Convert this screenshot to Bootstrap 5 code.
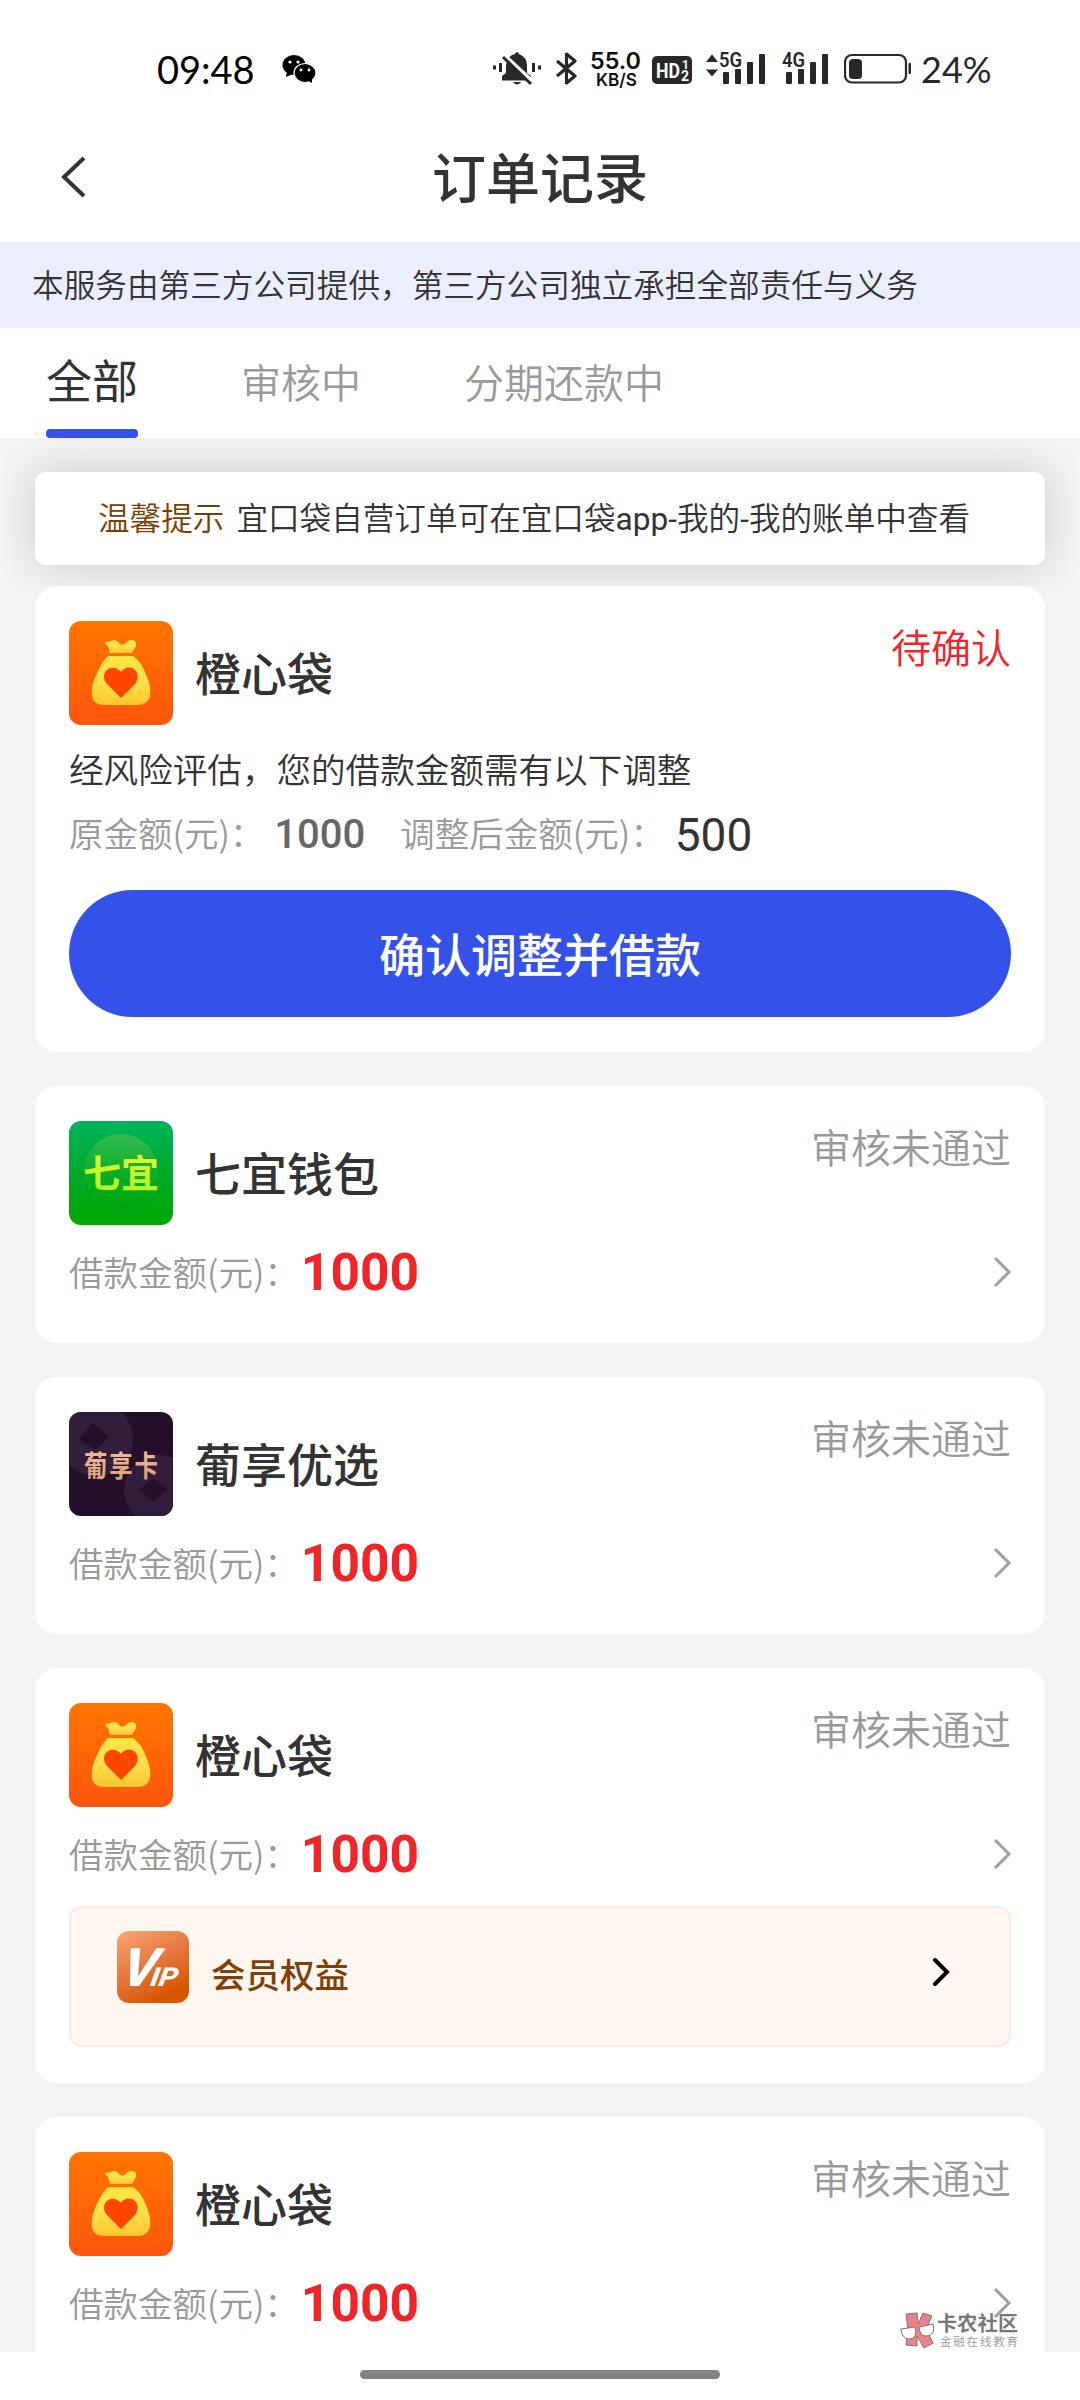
<!DOCTYPE html>
<html lang="zh-CN">
<head>
<meta charset="utf-8">
<meta name="viewport" content="width=device-width, initial-scale=1">
<title>订单记录</title>
<link href="https://cdn.jsdelivr.net/npm/bootstrap@5.3.0/dist/css/bootstrap.min.css" rel="stylesheet">
<style>
:root{--ink:#333;--muted:#999;--brand:#3452e9;--alert:#f22427}
body{width:1080px;height:2400px;overflow:hidden;background:#fff;color:var(--ink);font-family:"Noto Sans CJK SC",sans-serif;font-weight:350}
svg{display:block;flex:none}
.screen{height:2400px}
.status-bar{height:130px;padding:40px 87px 0 157px}
.clock{font:400 38px/50px Lato,sans-serif;color:#000;width:125px;padding-top:4px}
.status-icons svg{fill:#282828}
.pct{font:400 36px/50px Lato,sans-serif;color:#282828;padding-top:4px;width:72px}
.title-bar{height:112px;padding:0 60px}
.back{padding-top:23px}
.page-title{font-size:54px;line-height:64px;font-weight:500;margin-top:14px}
.notice{height:86px;background:#ebeefc;font-size:31.65px;line-height:83px;padding-left:32px}
.tabs{height:110px;padding-left:46px}
.tabs .nav-link{padding:0;color:var(--muted);font-size:40px;line-height:106px;height:110px;margin-right:103px}
.tabs .nav-link.active{color:var(--ink);font-size:46px;font-weight:400;line-height:100px;border-bottom:9px solid transparent;position:relative}
.tabs .nav-link.active::after{content:"";position:absolute;left:0;right:0;bottom:-9px;height:9px;border-radius:4px;background:var(--brand)}
.feed{height:1914px;background:#f3f3f3;padding:34px 35px 0;overflow:hidden}
.tip{flex:none;height:93px;border-radius:10px;background:#fff;box-shadow:0 0 44px rgba(0,0,0,.16);font-size:31.6px;line-height:88px;margin-bottom:21px;padding-left:63px;white-space:nowrap}
.tip-label{color:#7a3e00;margin-right:12px}
.latin{font-family:Roboto,sans-serif;font-weight:400}
.order{position:relative;border:0;border-radius:22px;background:#fff;padding:35px 34px 0;margin-bottom:34px;flex:none}
.order-confirm{height:466px}
.order-plain{height:257px}
.order-vip{height:415px}
.app-name{font-size:46px;line-height:60px;font-weight:500;margin:20px 0 0 22px}
.state{font-size:40px;line-height:56px;color:var(--muted);margin-left:auto;margin-top:-3px}
.state-alert{color:var(--alert)}
.field{font-size:34.5px;line-height:50px;color:var(--muted);white-space:nowrap;margin-top:-3px}
.amount-row{height:70px;margin-top:12px}
.amount{font:700 51.5px/60px Roboto,sans-serif;color:var(--alert);margin:1px 0 0 2px}
.amount-row svg{margin-right:-2px}
.remark{font-size:34.6px;line-height:50px;margin-top:18px}
.compare{height:64px;margin-top:8px}
.old-sum{font:500 40px/50px Roboto,sans-serif;color:#666;margin:3px 0 0 10px;width:126px}
.new-sum{font:400 46px/50px Roboto,sans-serif;margin:3px 0 0 10px}
.btn-confirm{height:127px;border-radius:64px;background:var(--brand);color:#fff;font-size:46px;font-weight:500;line-height:116px;padding:0 0 3px;border:0;margin-top:25px}
.vip{height:141px;margin-top:17px;border:2px solid #fcebdf;border-radius:12px;background:#fff7f0;padding:23px 57px 0 46px}
.vip-text{font-size:34.5px;line-height:50px;font-weight:500;color:#7f4109;margin:17px 0 0 22px}
.home-zone{height:48px;padding-top:18px}
.home-pill{width:360px;height:9px;border-radius:5px;background:#808080}
.stamp{position:absolute;left:900px;top:2301px;width:122px;height:60px}
</style>
</head>
<body>
<svg width="0" height="0" class="position-absolute">
  <defs>
    <linearGradient id="gOrange" x1="0" y1="0" x2="0" y2="1"><stop stop-color="#ff7500"/><stop offset="1" stop-color="#ff560d"/></linearGradient>
    <linearGradient id="gGold" x1="0" y1="0" x2="0" y2="1"><stop stop-color="#ffe63f"/><stop offset=".5" stop-color="#ffdf4c"/><stop offset="1" stop-color="#ffc72c"/></linearGradient>
    <linearGradient id="gGreen" x1="0" y1="0" x2="0" y2="1"><stop stop-color="#00b45c"/><stop offset=".6" stop-color="#00a820"/><stop offset="1" stop-color="#00a800"/></linearGradient>
    <linearGradient id="gBall" x1="0" y1="0" x2="0" y2="1"><stop stop-color="#38bb50"/><stop offset="1" stop-color="#00a80a" stop-opacity="0"/></linearGradient>
    <linearGradient id="gVip" x1="0" y1="0" x2=".5" y2="1"><stop stop-color="#f7a874"/><stop offset=".55" stop-color="#e6763d"/><stop offset="1" stop-color="#d75700"/></linearGradient>
    <linearGradient id="gLime" x1="0" y1="0" x2="0" y2="1"><stop stop-color="#f4f634"/><stop offset="1" stop-color="#a7f522"/></linearGradient>
    <linearGradient id="gCopper" x1="0" y1="0" x2="0" y2="1"><stop stop-color="#f6c5a3"/><stop offset="1" stop-color="#d99870"/></linearGradient>
    <symbol id="bag" viewBox="0 0 104 104">
      <rect width="104" height="104" rx="12" fill="url(#gOrange)"/>
      <path fill="url(#gGold)" d="M41 32 39 25Q36 23 36 21Q41 21 44 19Q48 19 51 23Q55 25 59 20Q62 18 66 20Q68 22 67 25L63 32Z"/>
      <path fill="url(#gGold)" d="M39 35H64C69 39 73 43 76 51C80 60 82 66 81 75Q79 84 68 84H36Q24 84 23 75C22 65 25 58 29 50C32 43 35 39 39 35Z"/>
      <path fill="#ff4600" d="M52 77 38 63C34 59 34 52 38 49C43 45 49 47 52 51C55 46 62 45 66 49C70 53 69 59 66 63Z"/>
    </symbol>
    <symbol id="next" viewBox="0 0 20 32"><path d="M2 2 16 16 2 30" fill="none" stroke="#a0a0a0" stroke-width="3"/></symbol>
  </defs>
</svg>

<div class="screen d-flex flex-column">
  <header class="status-bar d-flex">
    <div class="clock">09:48</div>
    <svg width="36" height="50" viewBox="282 40 36 50"><ellipse cx="294" cy="65" rx="11.5" ry="10"/><path d="M287 71 286 77 293 74Z"/><ellipse cx="305" cy="73" rx="11" ry="9.5" stroke="#fff" stroke-width="1.2"/><path d="M307 80 312 83 312 78Z"/><g fill="#fff"><circle cx="290" cy="62" r="1.6"/><circle cx="298" cy="62" r="1.6"/><circle cx="301" cy="70" r="1.4"/><circle cx="309" cy="70" r="1.4"/></g></svg>
    <div class="status-icons d-flex ms-auto">
      <svg width="64" height="50" viewBox="491 40 64 50"><path d="M492 65.500h3v4h-3zM498 63h3v9h-3zM531 63h3v9h-3zM537 65.500h3v4h-3z"/><path d="M501 80.500V76L505 73V66Q506 56 514 54Q516 50 518 54Q526 57 526 66V73L530 76V80.500ZM512 82H520Q516 87 512 82Z"/><path d="M504 56 531 81" stroke="#fff" stroke-width="4"/><path d="M502 57 530 84" stroke="#282828" stroke-width="3"/></svg>
      <svg width="35" height="50" viewBox="555 40 35 50"><path d="M556 61 574 76 565.500 83V54L574 61 556 76" fill="none" stroke="#282828" stroke-width="3.200" stroke-linejoin="round"/></svg>
      <svg width="61" height="50" viewBox="590 40 61 50" font-family="Inter,sans-serif" font-weight="600" style="fill:#111"><text x="589" y="68.500" font-size="23" textLength="51" lengthAdjust="spacingAndGlyphs">55.0</text><text x="595" y="86" font-size="17.500" textLength="41" lengthAdjust="spacingAndGlyphs">KB/S</text></svg>
      <svg width="54" height="50" viewBox="651 40 54 50"><rect x="651" y="56" width="40" height="28" rx="5"/><g fill="#fff" font-family="Roboto,sans-serif" font-weight="700"><text x="655" y="77.500" font-size="21" textLength="24" lengthAdjust="spacingAndGlyphs">HD</text><text x="681" y="69" font-size="12">1</text><text x="680" y="81" font-size="14">2</text></g></svg>
      <svg width="76" height="50" viewBox="705 40 76 50"><path d="M705 60.500 711 53 717 60.500ZM705 68 711 75 717 68Z" transform="translate(0 1.500)"/><text x="718" y="67" font-family="Roboto,sans-serif" font-weight="600" font-size="20" textLength="23" lengthAdjust="spacingAndGlyphs">5G</text><rect x="722" y="72" width="6" height="12" rx="1"/><rect x="734" y="69" width="6" height="15" rx="1"/><rect x="746" y="62" width="6" height="22" rx="1"/><rect x="758" y="54" width="6" height="30" rx="1"/></svg>
      <svg width="62" height="50" viewBox="781 40 62 50"><text x="781" y="67" font-family="Roboto,sans-serif" font-weight="600" font-size="20" textLength="23" lengthAdjust="spacingAndGlyphs">4G</text><rect x="785" y="72" width="6" height="12" rx="1"/><rect x="797" y="69" width="6" height="15" rx="1"/><rect x="809" y="62" width="6" height="22" rx="1"/><rect x="821" y="54" width="6" height="30" rx="1"/></svg>
      <svg width="77" height="50" viewBox="843 40 77 50"><rect x="844" y="55" width="61" height="27.500" rx="7" fill="none" stroke="#282828" stroke-width="2.200"/><rect x="848" y="59" width="13" height="20" rx="4"/><rect x="907.500" y="63" width="2.500" height="11" rx="1"/></svg>
      <div class="pct">24%</div>
    </div>
  </header>

  <div class="title-bar row g-0">
    <div class="col-3 back"><svg width="30" height="48" viewBox="60 153 30 48"><path d="M84 158 64 177 84 196" fill="none" stroke="#333" stroke-width="4"/></svg></div>
    <h1 class="page-title col-6 text-center mb-0">订单记录</h1>
  </div>

  <div class="notice">本服务由第三方公司提供，第三方公司独立承担全部责任与义务</div>

  <nav class="tabs nav flex-nowrap">
    <a class="nav-link active" href="#">全部</a>
    <a class="nav-link" href="#">审核中</a>
    <a class="nav-link" href="#">分期还款中</a>
  </nav>

  <main class="feed d-flex flex-column">
    <div class="tip"><span class="tip-label">温馨提示</span><span>宜口袋自营订单可在宜口袋<span class="latin">app-</span>我的<span class="latin">-</span>我的账单中查看</span></div>

    <section class="card order order-confirm">
      <div class="d-flex">
        <svg width="104" height="104"><use href="#bag"/></svg>
        <div class="app-name">橙心袋</div>
        <div class="state state-alert">待确认</div>
      </div>
      <div class="remark">经风险评估，您的借款金额需有以下调整</div>
      <div class="compare d-flex align-items-center">
        <span class="field">原金额(元)：</span><span class="old-sum">1000</span>
        <span class="field">调整后金额(元)：</span><span class="new-sum">500</span>
      </div>
      <button class="btn btn-confirm w-100">确认调整并借款</button>
    </section>

    <section class="card order order-plain">
      <div class="d-flex">
        <svg width="104" height="104" viewBox="0 0 104 104"><rect width="104" height="104" rx="12" fill="url(#gGreen)"/><circle cx="52" cy="50" r="37" fill="url(#gBall)"/><text x="14" y="66" font-size="38" font-weight="700" textLength="76" fill="url(#gLime)">七宜</text></svg>
        <div class="app-name">七宜钱包</div>
        <div class="state">审核未通过</div>
      </div>
      <div class="amount-row d-flex align-items-center">
        <span class="field">借款金额(元)：</span><span class="amount">1000</span>
        <svg class="ms-auto" width="20" height="32"><use href="#next"/></svg>
      </div>
    </section>

    <section class="card order order-plain">
      <div class="d-flex">
        <svg width="104" height="104" viewBox="0 0 104 104"><clipPath id="tile"><rect width="104" height="104" rx="12"/></clipPath><g clip-path="url(#tile)"><rect width="104" height="104" fill="#230f29"/><g fill="#321d3a"><path fill-rule="evenodd" d="M27-10a37 37 0 1 0 .1 0ZM24 11 40 25 26 38 10 27Z"/><path fill-rule="evenodd" d="M90 43a35 35 0 1 0 .1 0ZM84 66 99 78 84 89 70 78Z"/></g><g transform="translate(15 65) scale(.9 1.120)"><text font-size="26" font-weight="700" textLength="82" fill="url(#gCopper)">葡享卡</text></g></g></svg>
        <div class="app-name">葡享优选</div>
        <div class="state">审核未通过</div>
      </div>
      <div class="amount-row d-flex align-items-center">
        <span class="field">借款金额(元)：</span><span class="amount">1000</span>
        <svg class="ms-auto" width="20" height="32"><use href="#next"/></svg>
      </div>
    </section>

    <section class="card order order-vip">
      <div class="d-flex">
        <svg width="104" height="104"><use href="#bag"/></svg>
        <div class="app-name">橙心袋</div>
        <div class="state">审核未通过</div>
      </div>
      <div class="amount-row d-flex align-items-center">
        <span class="field">借款金额(元)：</span><span class="amount">1000</span>
        <svg class="ms-auto" width="20" height="32"><use href="#next"/></svg>
      </div>
      <div class="vip d-flex">
        <svg width="72" height="72" viewBox="0 0 72 72"><rect width="72" height="72" rx="12" fill="url(#gVip)"/><g fill="#fff" font-family="Roboto,sans-serif" font-weight="800" transform="translate(0 55) skewX(-20)"><text x="0" y="0" font-size="53" textLength="35" lengthAdjust="spacingAndGlyphs">V</text><text x="31" y="0" font-size="26" textLength="27" lengthAdjust="spacingAndGlyphs">IP</text></g></svg>
        <div class="vip-text">会员权益</div>
        <svg class="ms-auto" width="20" height="84" viewBox="0 0 20 84"><path d="M3 29 15 41 3 53" fill="none" stroke="#000" stroke-width="4" stroke-linecap="round"/></svg>
      </div>
    </section>

    <section class="card order order-plain">
      <div class="d-flex">
        <svg width="104" height="104"><use href="#bag"/></svg>
        <div class="app-name">橙心袋</div>
        <div class="state">审核未通过</div>
      </div>
      <div class="amount-row d-flex align-items-center">
        <span class="field">借款金额(元)：</span><span class="amount">1000</span>
        <svg class="ms-auto" width="20" height="32"><use href="#next"/></svg>
      </div>
    </section>
  </main>

  <footer class="home-zone d-flex justify-content-center"><div class="home-pill"></div></footer>
</div>

<svg class="stamp" viewBox="0 -10 122 60"><g stroke="#777" stroke-width="1"><path fill="#f08088" d="M6 3 17 2 18 13 23 2 32 5 26 18 33 32 24 37 17 25 17 35 6 34 8 19Z"/><path fill="#fff" d="M1 18 15 16Q18 28 9 28Q2 28 1 18ZM19 16 33 13Q36 24 27 25Q20 26 19 16Z"/></g><text x="37" y="20" font-size="20" font-weight="700" fill="#777" textLength="81">卡农社区</text><text x="40" y="35" font-size="11.500" fill="#999" textLength="78">金融在线教育</text></svg>
<script src="https://cdn.jsdelivr.net/npm/bootstrap@5.3.0/dist/js/bootstrap.bundle.min.js"></script>
</body>
</html>
